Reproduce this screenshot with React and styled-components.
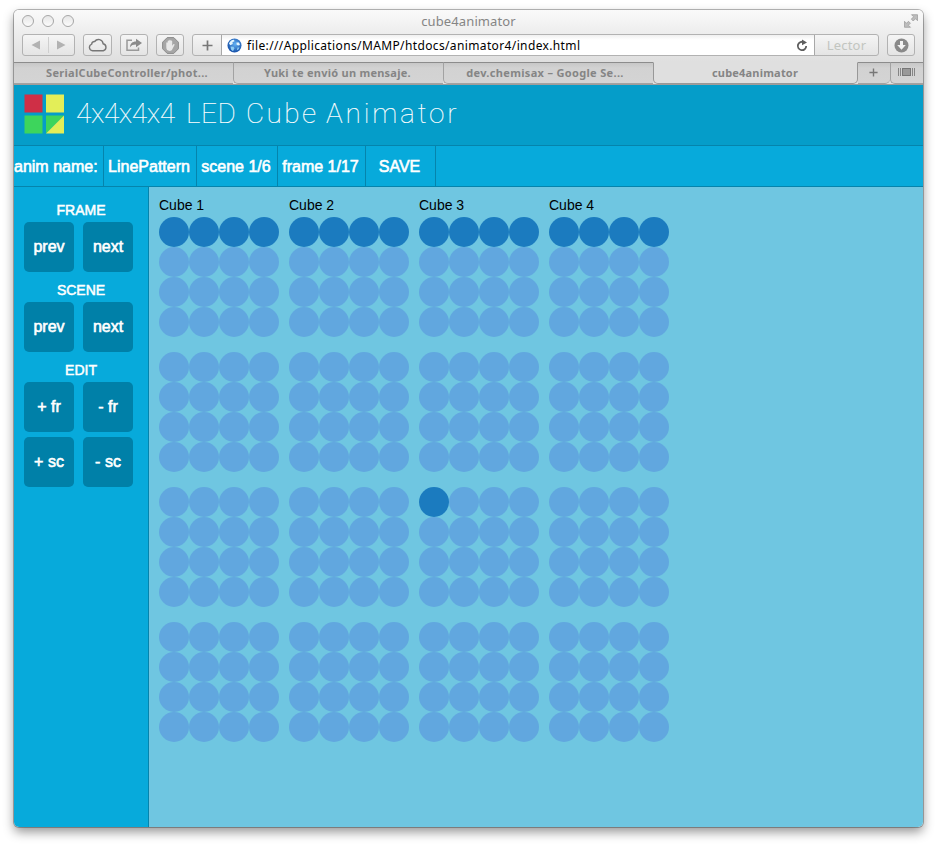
import React from "react";
import styled, { createGlobalStyle } from "styled-components";

const Global = createGlobalStyle`
  * { box-sizing: border-box; }
  html, body { margin: 0; background: #fff; }
  body { height: 847px; overflow: hidden; padding: 10px 0 0 14px; }
  svg { display: block; }
`;

const sans = `"Liberation Sans", Arial, sans-serif`;
const chromeFont = `"Noto Sans", "Open Sans", sans-serif`;

const Window = styled.div`
  width: 909px;
  height: 817px;
  display: flex;
  flex-direction: column;
  border-radius: 5px;
  overflow: hidden;
  box-shadow: 0 0 0 1px rgba(0, 0, 0, 0.27), 0 5px 11px rgba(0, 0, 0, 0.42);
`;

const Chrome = styled.div`
  height: 52px;
  flex: none;
  background: linear-gradient(#fafafa, #ededed 45%, #dfdfdf);
`;

const TitleBar = styled.div`
  height: 24px;
  display: grid;
  grid-template-columns: 200px 1fr 200px;
  align-items: center;
  padding: 0 5px 2px 8px;
`;

const Lights = styled.div`
  display: flex;
  gap: 8px;
`;

const Light = styled.span`
  width: 12px;
  height: 12px;
  border-radius: 50%;
  border: 1px solid #a6a6a6;
  background: linear-gradient(#e6e6e6, #fbfbfb);
`;

const WindowTitle = styled.div`
  font: 13px/22px ${chromeFont};
  letter-spacing: 0.12px;
  color: #858585;
  text-align: center;
  padding-right: 3px;
`;

const Expand = styled.div`
  justify-self: end;
`;

const Toolbar = styled.div`
  display: flex;
  gap: 8px;
  padding: 0 8px;
  height: 22px;
`;

const ToolButton = styled.div`
  width: ${(p) => p.$w || 29}px;
  height: 22px;
  display: flex;
  align-items: center;
  justify-content: center;
  border: 1px solid #b2b2b2;
  border-radius: 3px;
  background: linear-gradient(#f5f5f5, #e4e4e4);
`;

const AddressGroup = styled.div`
  flex: 1;
  display: flex;
  border: 1px solid #b2b2b2;
  border-radius: 3px;
  overflow: hidden;
  background: linear-gradient(#f5f5f5, #e4e4e4);
`;

const AddBookmark = styled.div`
  width: 28px;
  display: flex;
  align-items: center;
  justify-content: center;
`;

const Address = styled.div`
  flex: 1;
  display: flex;
  align-items: center;
  padding: 1px 6px 0 5px;
  background: linear-gradient(#f0f0f0, #fff 5px);
  border: 1px solid #a8a8a8;
  border-width: 0 1px;
`;

const Url = styled.span`
  flex: 1;
  margin-left: 5px;
  font: 12px/18px ${chromeFont};
  letter-spacing: 0.37px;
  color: #000;
`;

const Reader = styled.div`
  width: 63px;
  text-align: center;
  font: 13px/20px ${chromeFont};
  letter-spacing: 0.2px;
  color: #c2c5c0;
`;

const Tabs = styled.div`
  height: 23px;
  flex: none;
  display: flex;
  background: #e0e0e0;
  border-bottom: 1px solid #a09d9b;
`;

const Tab = styled.div`
  width: ${(p) => p.$w}px;
  height: 22px;
  border: 1px solid ${(p) => (p.$active ? "#989898" : "#a2a2a2")};
  border-top-color: ${(p) => (p.$active ? "transparent" : "#8c8c8c")};
  border-left-width: ${(p) => (p.$first || p.$joined ? 0 : 1)}px;
  border-right-width: ${(p) => (p.$active ? 1 : 0)}px;
  border-radius: ${(p) => (p.$active ? "0 0 5px 5px" : p.$first ? "0" : p.$joined ? "0 0 5px 0" : "0 0 0 5px")};
  background: ${(p) => (p.$active ? "#dfdfdf" : "linear-gradient(#c7c7c7, #d2d2d2 5px, #d4d4d4)")};
  display: flex;
  align-items: center;
  justify-content: center;
  padding: 0 ${(p) => p.$pr || 0}px 1px ${(p) => p.$pl || 0}px;
  font: bold 11px/18px ${chromeFont};
  letter-spacing: ${(p) => p.$ls || 0}px;
  white-space: nowrap;
  color: #858585;
`;

const Header = styled.header`
  height: 61px;
  flex: none;
  display: flex;
  align-items: center;
  padding: 0 0 3px 10px;
  gap: 12px;
  background: #059dc9;
  border-bottom: 1px solid #0584ac;
`;

const AppTitle = styled.h1`
  margin: 0;
  display: flex;
  font: 100 28px/40px Roboto, sans-serif;
  -webkit-text-stroke: 0.15px #fff;
  white-space: pre;
  color: #fff;
`;

const Word = styled.span`
  width: ${(p) => p.$w}px;
  letter-spacing: ${(p) => p.$ls}px;
`;

const Nav = styled.nav`
  height: 41px;
  flex: none;
  display: flex;
  background: #07aadb;
  border-bottom: 1px solid #0584ac;
`;

const NavItem = styled.div`
  width: ${(p) => p.$w}px;
  border-right: 1px solid #0584ac;
  font: 16px/42px ${sans};
  -webkit-text-stroke: 0.6px #fff;
  color: #fff;
  text-align: center;
  white-space: nowrap;
  padding-right: ${(p) => p.$pr ?? 2}px;
`;

const Main = styled.main`
  flex: 1;
  display: flex;
`;

const Sidebar = styled.aside`
  width: 135px;
  padding: 15px 15px 0 10px;
  background: #07aadb;
  border-right: 1px solid #0584ac;
`;

const Group = styled.section`
  margin-bottom: 10px;
`;

const GroupTitle = styled.div`
  height: 20px;
  padding-left: 5px;
  font: 14px/17px ${sans};
  -webkit-text-stroke: 0.5px #fff;
  color: #fff;
  text-align: center;
`;

const Buttons = styled.div`
  display: grid;
  grid-template-columns: 50px 50px;
  gap: 5px 9px;
`;

const Button = styled.button`
  height: 50px;
  padding: 0;
  border: 0;
  border-radius: 5px;
  background: #0080a8;
  font: 16px/50px ${sans};
  -webkit-text-stroke: 0.6px #fff;
  color: #fff;
`;

const Canvas = styled.section`
  flex: 1;
  display: flex;
  gap: 10px;
  padding: 10px;
  background: #6fc6e1;
`;

const Cube = styled.div`
  width: 120px;
`;

const CubeTitle = styled.div`
  height: 20px;
  font: 14px/17px ${sans};
  color: #000;
`;

const Layer = styled.div`
  display: grid;
  grid-template-columns: repeat(4, 30px);
  grid-auto-rows: 30px;
  margin-bottom: 15px;
`;

const Led = styled.span`
  border-radius: 50%;
  background: ${(p) => (p.$on ? "#1b7bbf" : "#61a7df")};
`;

const Plus = ({ size = 11 }) => (
  <svg width={size} height={size} viewBox="0 0 11 11">
    <path d="M5.500 0.500v10M0.500 5.500h10" stroke="#777" strokeWidth="1.700" />
  </svg>
);

const BackForward = () => (
  <svg width="51" height="20" viewBox="0 0 51 20">
    <path d="M17 5.500v9l-8.500-4.500zM34 5.500v9l8.500-4.500z" fill="#b2b2b2" />
    <path d="M25.500 2v16" stroke="#cfcfcf" />
  </svg>
);

const CloudIcon = () => (
  <svg width="20" height="14" viewBox="0 0 20 14">
    <path d="M4.600 12.700a3.400 3.400 0 0 1-.9-6.600 2.700 2.700 0 0 1 3-2.600 4.600 4.600 0 0 1 8.400 2.200 3.600 3.600 0 0 1 .2 7z" fill="none" stroke="#777" strokeWidth="1.400" />
  </svg>
);

const ShareIcon = () => (
  <svg width="18" height="14" viewBox="0 0 18 14">
    <path d="M7 2.200H2v10h11.500V9.500" fill="none" stroke="#999" strokeWidth="1.500" />
    <path d="M5 9.300c.2-4 2.400-5.800 6-5.900V.7l6 4.300-6 4.300V6.600c-2.800 0-4.500.6-6 2.700z" fill="#8a8a8a" />
  </svg>
);

const HandIcon = () => (
  <svg width="17" height="17" viewBox="0 0 17 17">
    <path d="M5.200.6h6.600l4.600 4.600v6.600l-4.600 4.600H5.200L.6 11.800V5.200z" fill="#a6a6a6" stroke="#8c8c8c" />
    <path d="M4.300 6c0-1 1.300-1 1.400 0V4.200c0-1 1.400-1 1.500 0v-.8c0-1 1.500-1 1.500 0v.8c.1-1 1.500-1 1.500 0v4.500l1-1.300c.7-.7 1.700 0 1.200.9l-2.100 4c-.5 1-1.200 1.600-2.600 1.600-2.300 0-3.400-1.400-3.400-3.600z" fill="#e8e8e8" />
  </svg>
);

const Globe = () => (
  <svg width="15" height="15" viewBox="0 0 15 15">
    <defs>
      <radialGradient id="globe" cx="55%" cy="40%" r="60%">
        <stop offset="0" stopColor="#62b2f3" />
        <stop offset="1" stopColor="#164fa8" />
      </radialGradient>
    </defs>
    <circle cx="7.500" cy="7.500" r="7" fill="url(#globe)" />
    <path d="M2 5.500c1-2.300 2.500-3.800 5-3.800l.5 1.600-2 1 .3 1.800-2.500 1.200zM9.500 4.500l2.500 0 1 2.500-2 .5-1.500-1z" fill="#e4f5fd" />
    <path d="M3.500 8.500l3 .3 1 1.500-1.500 3-2-1.800zM10.500 9.500l2 0-1.500 2.500-1 0z" fill="#8ecdf3" />
  </svg>
);

const ReloadIcon = () => (
  <svg width="12" height="13" viewBox="0 0 12 13">
    <path d="M8 3.300A4.200 4.200 0 1 0 10.200 7" fill="none" stroke="#5e5e5e" strokeWidth="1.800" />
    <path d="M6 .5l5 3-5 2.700z" fill="#5e5e5e" />
  </svg>
);

const DownloadIcon = () => (
  <svg width="15" height="15" viewBox="0 0 15 15">
    <circle cx="7.500" cy="7.500" r="7" fill="#898989" />
    <path d="M6 3h3v4h2.800l-4.300 4.700L3.200 7H6z" fill="#f2f2f2" />
  </svg>
);

const ExpandIcon = () => (
  <svg width="14" height="14" viewBox="0 0 14 14" fill="#bdbdbd" stroke="#989898" strokeWidth=".7">
    <path d="M7.500.7h6v6l-2-2-2.300 2.300-1.900-1.900 2.300-2.300z" />
    <path d="M6.500 13.300h-6v-6l2 2 2-2 1.900 1.900-2 2z" />
  </svg>
);

const TabsIcon = () => (
  <svg width="17" height="9" viewBox="0 0 17 9">
    <path d="M.5 0v8M16.500 0v8M2.500 0v8M14.500 0v8" stroke="#858585" />
    <rect x="4.500" y=".5" width="8" height="7" fill="#999" stroke="#777" />
  </svg>
);

const Logo = () => (
  <svg width="40" height="40" viewBox="0 0 40 40">
    <path d="M.5.500h18v18H.5z" fill="#cf2f46" />
    <path d="M22 .5h18v18H22z" fill="#e3ee58" />
    <path d="M.5 21.500h18v18H.5zM22 21.500h18l-18 18z" fill="#3dd55c" />
    <path d="M40 21.500v18H22z" fill="#e3ee58" />
  </svg>
);

const groups = [
  { title: "FRAME", buttons: ["prev", "next"] },
  { title: "SCENE", buttons: ["prev", "next"] },
  { title: "EDIT", buttons: ["+ fr", "- fr", "+ sc", "- sc"] },
];

const isLit = (cube, layer, led) =>
  (layer === 0 && led < 4) || (cube === 2 && layer === 2 && led === 0);

export default function App() {
  return (
    <>
      <Global />
      <Window>
        <Chrome>
          <TitleBar>
            <Lights><Light /><Light /><Light /></Lights>
            <WindowTitle>cube4animator</WindowTitle>
            <Expand><ExpandIcon /></Expand>
          </TitleBar>
          <Toolbar>
            <ToolButton $w={53}><BackForward /></ToolButton>
            <ToolButton><CloudIcon /></ToolButton>
            <ToolButton $w={28}><ShareIcon /></ToolButton>
            <ToolButton $w={28}><HandIcon /></ToolButton>
            <AddressGroup>
              <AddBookmark><Plus /></AddBookmark>
              <Address>
                <Globe />
                <Url>file:///Applications/MAMP/htdocs/animator4/index.html</Url>
                <ReloadIcon />
              </Address>
              <Reader>Lector</Reader>
            </AddressGroup>
            <ToolButton $w={28}><DownloadIcon /></ToolButton>
          </Toolbar>
        </Chrome>
        <Tabs>
          <Tab $w={219} $first $ls={0.3} $pl={7}>SerialCubeController/phot...</Tab>
          <Tab $w={210} $ls={0.25} $pr={2}>Yuki te envió un mensaje.</Tab>
          <Tab $w={210} $ls={0.33} $pr={7}>dev.chemisax – Google Se...</Tab>
          <Tab $w={205} $active $ls={0.2} $pr={1}>cube4animator</Tab>
          <Tab $w={32} $joined $pr={1}><Plus size={9} /></Tab>
          <Tab $w={33} $pr={1}><TabsIcon /></Tab>
        </Tabs>
        <Header>
          <Logo />
          <AppTitle>
            <Word $w={110} $ls={-0.4}>4x4x4x4 </Word>
            <Word $w={60} $ls={0.6}>LED </Word>
            <Word $w={80} $ls={2.4}>Cube </Word>
            <Word $w={140} $ls={2.8}>Animator</Word>
          </AppTitle>
        </Header>
        <Nav>
          <NavItem $w={90} $pr={7}>anim name:</NavItem>
          <NavItem $w={93}>LinePattern</NavItem>
          <NavItem $w={81}>scene 1/6</NavItem>
          <NavItem $w={88}>frame 1/17</NavItem>
          <NavItem $w={70}>SAVE</NavItem>
        </Nav>
        <Main>
          <Sidebar>
            {groups.map((g) => (
              <Group key={g.title}>
                <GroupTitle>{g.title}</GroupTitle>
                <Buttons>
                  {g.buttons.map((b) => <Button key={b}>{b}</Button>)}
                </Buttons>
              </Group>
            ))}
          </Sidebar>
          <Canvas>
            {[0, 1, 2, 3].map((c) => (
              <Cube key={c}>
                <CubeTitle>Cube {c + 1}</CubeTitle>
                {[0, 1, 2, 3].map((l) => (
                  <Layer key={l}>
                    {Array.from({ length: 16 }, (_, i) => (
                      <Led key={i} $on={isLit(c, l, i)} />
                    ))}
                  </Layer>
                ))}
              </Cube>
            ))}
          </Canvas>
        </Main>
      </Window>
    </>
  );
}
